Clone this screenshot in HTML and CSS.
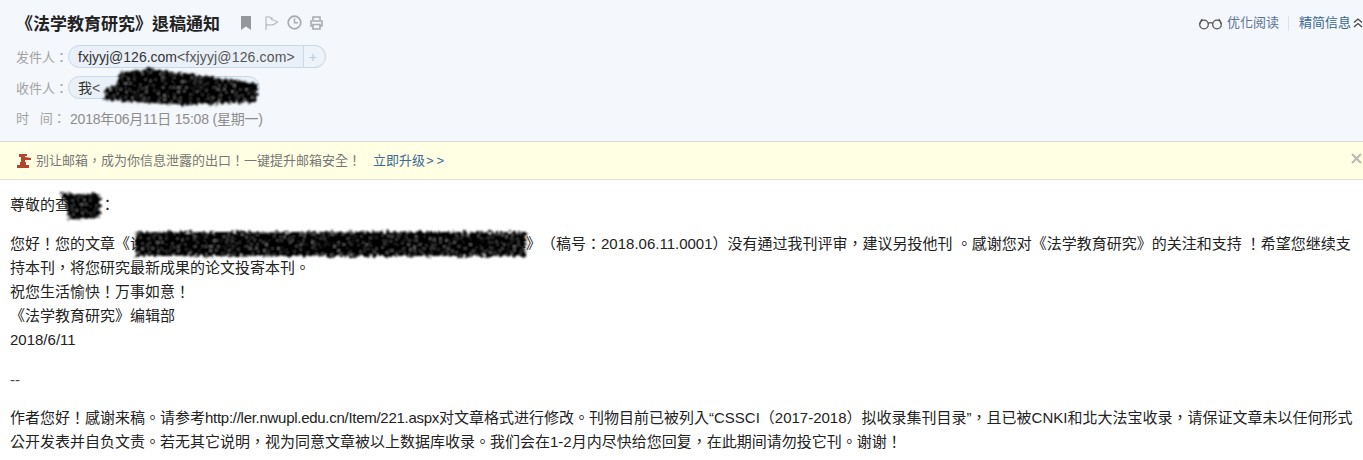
FILE: index.html
```html
<!DOCTYPE html>
<html lang="zh-CN">
<head>
<meta charset="utf-8">
<title>《法学教育研究》退稿通知</title>
<link rel="stylesheet" href="styles.css">
</head>
<body>
<svg class="defs" width="0" height="0" aria-hidden="true">
  <filter id="rough" x="-15%" y="-40%" width="130%" height="180%">
    <feTurbulence type="fractalNoise" baseFrequency="0.3" numOctaves="2" seed="4" result="n"/>
    <feDisplacementMap in="SourceGraphic" in2="n" scale="8" xChannelSelector="R" yChannelSelector="G" result="d"/>
    <feTurbulence type="fractalNoise" baseFrequency="0.5" numOctaves="2" seed="9" result="n2"/>
    <feColorMatrix in="n2" type="matrix" values="0 0 0 0 .45  0 0 0 0 .45  0 0 0 0 .45  0 0 0 7 -4.700" result="sp"/>
    <feComposite in="sp" in2="d" operator="in" result="s"/>
    <feMerge result="m"><feMergeNode in="d"/><feMergeNode in="s"/></feMerge>
    <feGaussianBlur in="m" stdDeviation="1"/>
  </filter>
</svg>
<header class="head">
  <div class="head-top">
    <div class="title-row">
      <h1 class="subject">《法学教育研究》退稿通知</h1>
      <div class="tools">
        <svg width="10" height="14" viewBox="0 0 10 14"><path d="M0 0h10v14L5 10.500 0 14z" fill="#94979c"/></svg>
        <svg class="tool-flag" width="14" height="14" viewBox="0 0 14 14"><path d="M1 14V1c3-1 4 1 6 1l-.5 1.500c2 .5 4 1 6 2.500C10 8 8 9 6.500 9 4 9 3 8.500 1 9" fill="none" stroke="#b4b7bc" stroke-width="1.200"/></svg>
        <svg width="15" height="15" viewBox="0 0 15 15"><circle cx="7.500" cy="7.500" r="6.300" fill="none" stroke="#a8abb0" stroke-width="1.700"/><path d="M7.500 3.500v4.300h3.400" fill="none" stroke="#a8abb0" stroke-width="1.500"/></svg>
        <svg width="13" height="14" viewBox="0 0 13 14"><path d="M3 4V1h7v3M3 10H1V5h11v5h-2M3 8.500h7V13H3z" fill="none" stroke="#a8abb0" stroke-width="1.600"/></svg>
      </div>
    </div>
    <div class="head-links">
      <svg width="25" height="13" viewBox="0 0 25 13"><g fill="none" stroke="#555" stroke-width="1.300"><circle cx="6" cy="7.500" r="4.300"/><circle cx="19" cy="7.500" r="4.300"/><path d="M10 6.500c1.500-1 3.500-1 5 0M1.700 7 4 2M23.300 7 21 2"/></g></svg>
      <a class="link">优化阅读</a>
      <span class="sep"></span>
      <a class="link link-dark">精简信息</a>
      <svg class="chev" width="10" height="10" viewBox="0 0 10 10"><path d="M1 4.500 5 1l4 3.500M1 9l4-3.500L9 9" fill="none" stroke="#444" stroke-width="1.300"/></svg>
    </div>
  </div>
  <div class="meta-row">
    <span class="label">发件人：</span>
    <span class="pill-group">
      <span class="pill-main">fxjyyj@126.com<span class="addr">&lt;fxjyyj@126.com&gt;</span></span><span class="pill-add">+</span>
    </span>
  </div>
  <div class="meta-row">
    <span class="label">收件人：</span>
    <span class="pill-to">我<span class="addr">&lt;</span>
      <svg class="scribble scribble-to" width="170" height="45" viewBox="0 0 170 45"><path class="ink" d="M22 5 52 2l40 5 45 6 22 4v18l-77 3-75-5V23l13-8z"/></svg>
    </span>
  </div>
  <div class="meta-row meta-time">
    <span class="label">时&nbsp;&nbsp;&nbsp;间：</span><span class="time">2018年06月11日 15:08 (星期一)</span>
  </div>
</header>
<div class="notice">
  <svg class="notice-ic" width="15" height="16" viewBox="0 0 15 16"><path d="M2 1h8v2H8v1l6 1v2H8v2h1v3h3v3H0v-3h3V9h1V4H2z" fill="#b5442c"/></svg>
  <span class="notice-text">别让邮箱，成为你信息泄露的出口！一键提升邮箱安全！</span>
  <a class="notice-link">立即升级<span class="arrows">&gt;&gt;</span></a>
  <svg class="notice-close" width="11" height="11" viewBox="0 0 11 11"><path d="M1 1l9 9M10 1l-9 9" stroke="#b9b9b2" stroke-width="2"/></svg>
</div>
<main class="mail">
  <p class="greet">尊敬的查<span class="gap-name"><svg class="scribble scribble-name" width="50" height="36" viewBox="0 0 50 36"><path class="ink" d="M6 4l12 2h28v24l-31 2-3-16z"/></svg></span>：</p>
  <p class="para">您好！您的文章《询<span class="gap-title"><svg class="scribble scribble-title" width="400" height="36" viewBox="0 0 400 36"><path class="ink" d="M5 6h391v24H5z"/></svg></span>本》（稿号：2018.06.11.0001）没有通过我刊评审，建议另投他刊 。感谢您对《法学教育研究》的关注和支持 ！希望您继续支持本刊，将您研究最新成果的论文投寄本刊。<br>祝您生活愉快！万事如意！<br>《法学教育研究》编辑部<br>2018/6/11</p>
  <p class="sign">--</p>
  <p class="para-foot">作者您好！感谢来稿。请参考<span class="url">http://ler.nwupl.edu.cn/Item/221.aspx</span>对文章格式进行修改。刊物目前已被列入“CSSCI（2017-2018）拟收录集刊目录”，且已被CNKI和北大法宝收录，请保证文章未以任何形式公开发表并自负文责。若无其它说明，视为同意文章被以上数据库收录。我们会在1-2月内尽快给您回复，在此期间请勿投它刊。谢谢！</p>
</main>
</body>
</html>
```
FILE: styles.css
```css
* { box-sizing: border-box; }
html, body { margin: 0; padding: 0; }
body {
  width: 1363px;
  height: 460px;
  overflow: hidden;
  background: #fff;
  color: #222;
  font: 15px/24px "Liberation Sans", "Noto Sans CJK TC", sans-serif;
  font-feature-settings: "locl" 0;
  text-spacing-trim: space-all;
}
.defs { position: absolute; }
.head {
  height: 142px;
  padding: 11px 0 0 16px;
  background: #f4f7fc;
  border-bottom: 1px solid #d5d9de;
}
.head-top { display: flex; justify-content: space-between; height: 30px; }
.title-row { display: flex; align-items: center; height: 28px; }
.subject { margin: 0; font-size: 17px; line-height: 28px; font-weight: 700; color: #222; }
.tools { display: flex; align-items: center; gap: 8px; margin-left: 21px; margin-top: -5px; }
.tool-flag { margin-left: 6px; margin-right: 0; }
.head-links {
  display: flex; align-items: center; gap: 4px; height: 24px; padding-right: 0; font-size: 13px;
}
.link { color: #5a7396; }
.link-dark { color: #37678c; }
.chev { margin-left: -2px; }
.sep { width: 1px; height: 15px; background: #dfe3e8; margin: 0 6px 0 5px; }
.meta-row { display: flex; align-items: center; height: 31px; color: #999; font-size: 14px; }
.label { color: #a2a2a2; width: 52px; font-size: 13px; padding-top: 2px; white-space: nowrap; }
.meta-row .pill-group, .meta-row .pill-to { color: #333; }
.pill-group { display: flex; height: 23px; }
.pill-main {
  display: flex; align-items: center; height: 23px; padding: 0 8px 0 9px;
  background: #e9f0f8; border: 1px solid #c8d8e8;
  border-radius: 12px 0 0 12px;
}
.addr { color: #555; letter-spacing: .15px; }
.pill-add {
  display: flex; align-items: center; justify-content: center; width: 22px;
  color: #b8cadb; background: #edf3f9; border: 1px solid #c8d8e8; border-left: 0;
  border-radius: 0 12px 12px 0; padding-right: 3px;
}
.pill-to {
  position: relative; display: flex; align-items: center; height: 23px; width: 192px; padding-left: 9px;
  background: #e9f0f8; border: 1px solid #c8d8e8; border-radius: 12px;
}
.scribble { position: absolute; overflow: visible; }
.ink { fill: #050505; filter: url(#rough); }
.scribble-to { left: 29px; top: -10px; }
.time { color: #8c8c8c; letter-spacing: -.2px; margin-left: 2px; padding-top: 2px; }
.meta-time { height: 30px; }
.notice {
  position: relative; display: flex; align-items: center; height: 38px; padding-left: 17px;
  background: #ffffe3; border-bottom: 1px solid #dfdfd2; font-size: 13px; color: #777;
}
.notice-ic { margin-right: 4px; }
.notice-link { margin-left: 12px; color: #3b6a93; }
.arrows { margin-left: 1px; letter-spacing: 3px; }
.notice-close { position: absolute; right: 1px; top: 11px; }
.mail { padding: 13px 5px 0 10px; color: #222; }
.mail p { margin: 0; }
.greet { height: 39px; }
.sign { padding-top: 16px; height: 40px; color: #444; }
.para-foot { padding-top: 14px; }
.url { letter-spacing: -.28px; }
.gap-name { position: relative; display: inline-block; width: 30px; height: 16px; }
.gap-title { position: relative; display: inline-block; width: 366px; height: 16px; }
.scribble-name { left: -16px; top: -6px; }
.scribble-title { left: -15px; top: -7px; }
```
